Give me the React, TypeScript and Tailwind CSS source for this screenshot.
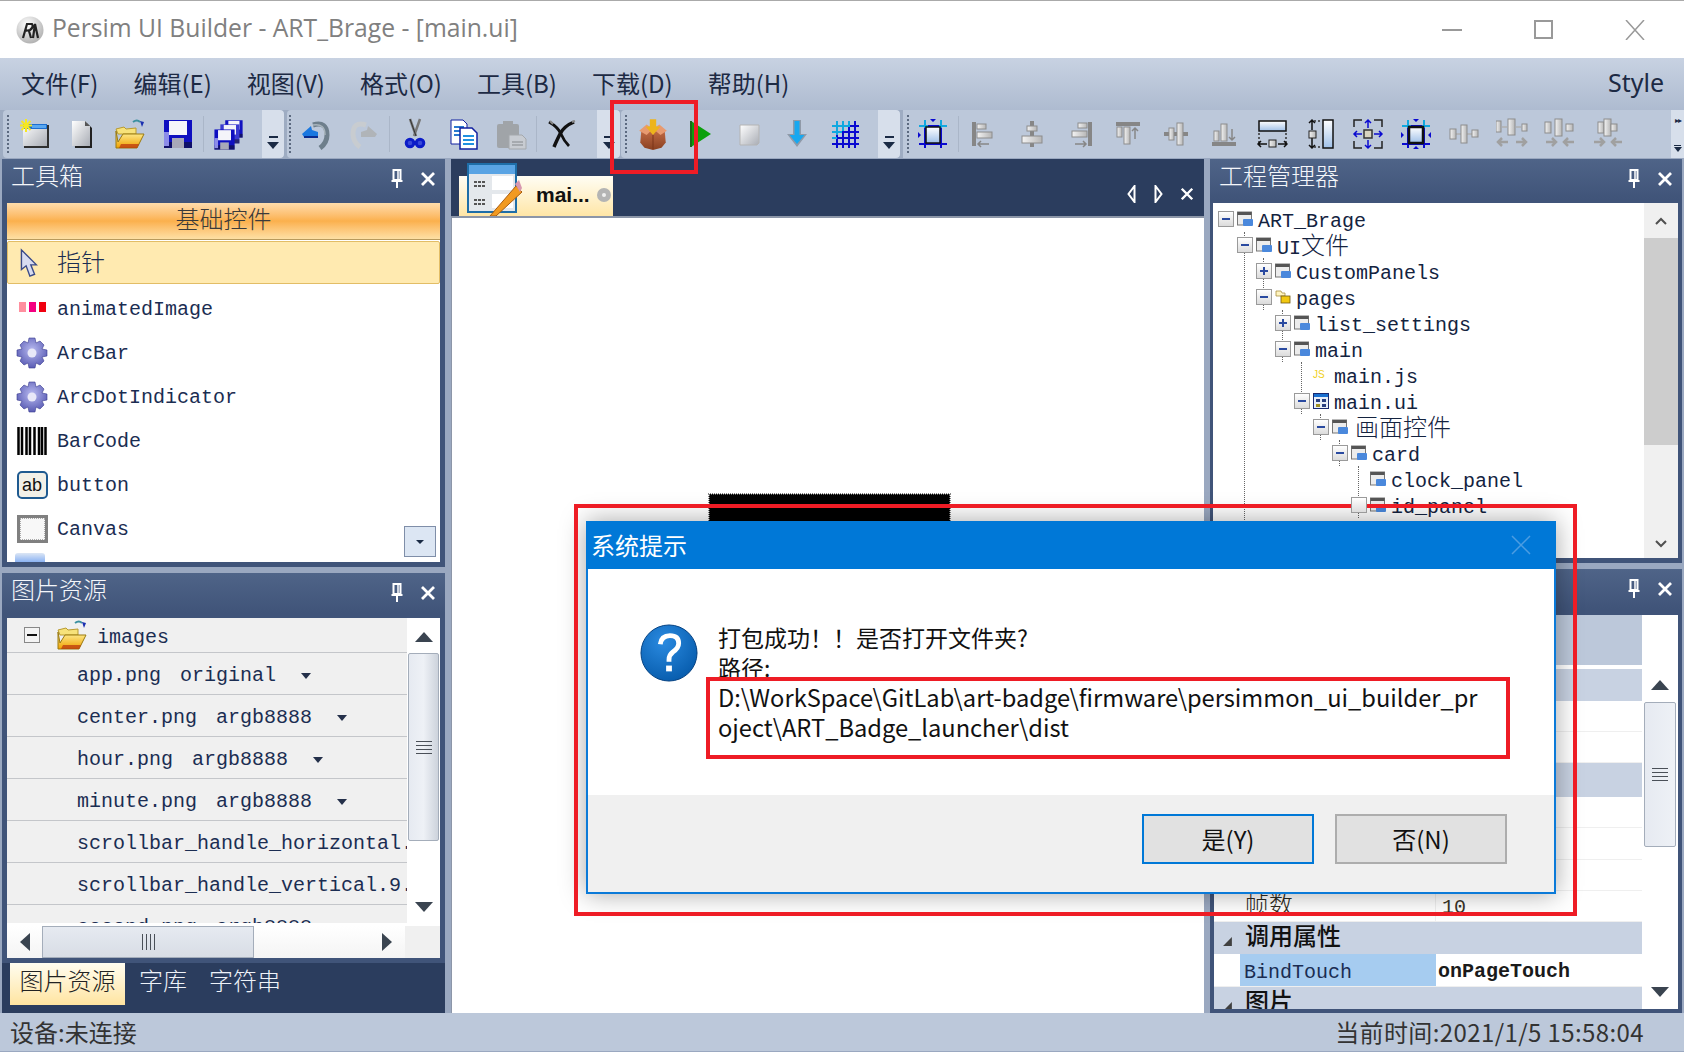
import React from "react";

const cjk = "font-['Noto_Sans_CJK_SC',sans-serif]";

function C({ children, className = "" }: { children: React.ReactNode; className?: string }) {
  return <span className={`font-['Noto_Sans_CJK_SC',sans-serif] text-[24px] font-light leading-none ${className}`}>{children}</span>;
}

function Defs() {
  return (
    <svg className="absolute h-0 w-0">
      <defs>
        <linearGradient id="wg" x1="0" y1="0" x2="1" y2="1"><stop offset="0" stopColor="#ffffff" /><stop offset="1" stopColor="#a9adb5" /></linearGradient>
        <linearGradient id="bar" x1="0" y1="0" x2="1" y2="0"><stop offset="0" stopColor="#f4f4f4" /><stop offset="1" stopColor="#b5b5b5" /></linearGradient>
        <linearGradient id="barb" x1="0" y1="0" x2="0" y2="1"><stop offset="0" stopColor="#ffffff" /><stop offset="1" stopColor="#9fc0e8" /></linearGradient>
        <linearGradient id="folder" x1="0" y1="0" x2="0" y2="1"><stop offset="0" stopColor="#fff5a0" /><stop offset="1" stopColor="#f0a000" /></linearGradient>
        <linearGradient id="box" x1="0" y1="0" x2="0" y2="1"><stop offset="0" stopColor="#c8704a" /><stop offset="1" stopColor="#8a4020" /></linearGradient>
        <radialGradient id="gear" cx="0.5" cy="0.4" r="0.7"><stop offset="0" stopColor="#b8baf0" /><stop offset="1" stopColor="#4a4caa" /></radialGradient>
        <radialGradient id="logo" cx="0.4" cy="0.3" r="0.8"><stop offset="0" stopColor="#ffffff" /><stop offset="1" stopColor="#a8a8a8" /></radialGradient>
        <radialGradient id="qm" cx="0.4" cy="0.3" r="0.8"><stop offset="0" stopColor="#2a8ae0" /><stop offset="1" stopColor="#0458a8" /></radialGradient>
      </defs>
    </svg>
  );
}

function I({ children, size = 32, className = "" }: { children: React.ReactNode; size?: number; className?: string }) {
  return (
    <svg viewBox="0 0 32 32" width={size} height={size} className={`shrink-0 ${className}`}>
      {children}
    </svg>
  );
}

const NewWin = () => (
  <I>
    <rect x="6" y="7" width="25" height="23" fill="#303030" />
    <rect x="5" y="6" width="24" height="22" fill="url(#wg)" />
    <rect x="5" y="6" width="24" height="5" fill="#1d6fd0" />
    <rect x="14" y="7" width="14" height="3" fill="#5aa8f0" />
    <path d="M8 1v13M2 7.5h12M3.5 3l9 9M12.500 3l-9 9" stroke="#f6e820" strokeWidth="2" />
  </I>
);
const NewDoc = () => (
  <I>
    <path d="M8 5h13l5 5v20H9z" fill="#222" />
    <path d="M6 3h13l5 5v20H6z" fill="url(#wg)" />
    <path d="M19 3l5 5h-5z" fill="#555" />
  </I>
);
const Floppy = ({ x = 0, y = 0, s = 1, c = "#0f0fc0" }: { x?: number; y?: number; s?: number; c?: string }) => (
  <g transform={`translate(${x} ${y}) scale(${s})`}>
    <rect x="2" y="2" width="28" height="28" fill={c} />
    <rect x="2" y="24" width="28" height="6" fill="#111" opacity="0.5" />
    <rect x="7" y="3" width="18" height="14" fill="#f4f4fa" />
    <rect x="10" y="20" width="12" height="10" fill="#a8a8b8" />
    <rect x="2" y="14" width="5" height="14" fill="#8c8ce8" />
  </g>
);
const OpenFolder = ({ size = 32 }: { size?: number }) => (
  <I size={size}>
    <path d="M2 11l8-2 2 2 10-1v6H4z" fill="#f7e27a" stroke="#b89a30" strokeWidth="1" />
    <path d="M2 13v17h21l7-14H9l-5 8z" fill="url(#folder)" stroke="#9a7a10" strokeWidth="1" />
    <path d="M5 30h18l2-4H7z" fill="#b83010" opacity="0.7" />
    <path d="M19 4q4-3 7 0" stroke="#3a90a0" strokeWidth="2" fill="none" />
    <path d="M26 3l4 1-2 5z" fill="#1a30b0" />
  </I>
);
const Save = () => <I><Floppy /></I>;
const SaveAll = () => (
  <I>
    <Floppy x={11} y={1} s={0.62} c="#1212c0" />
    <Floppy x={6} y={5} s={0.68} c="#3a3ad0" />
    <Floppy x={0} y={10} s={0.72} />
  </I>
);
const Undo = () => (
  <I>
    <path d="M13 7Q27 3 27 17q0 8-7 13" stroke="#6e7f8c" strokeWidth="5" fill="none" />
    <path d="M13 7Q25 5 25 17" stroke="#a8b4bc" strokeWidth="1.500" fill="none" />
    <path d="M2 16L11 8l1 4 6 2v5H4z" fill="#1a78e0" />
    <path d="M4 19h14" stroke="#0a2c90" strokeWidth="2" />
  </I>
);
const Redo = () => (
  <I>
    <path d="M18 7Q5 3 5 16q0 8 7 13" stroke="#c8ccd0" strokeWidth="5" fill="none" />
    <path d="M29 16L20 8l-1 4-6 2v5h14z" fill="#b0b4b8" />
  </I>
);
const Cut = () => (
  <I>
    <path d="M11 1l6 17M21 1l-6 17" stroke="#777" strokeWidth="2.500" />
    <path d="M11 1l6 17" stroke="#333" strokeWidth="1" />
    <circle cx="11" cy="25" r="3.800" fill="#3a4ad8" stroke="#0c1cc8" strokeWidth="3" />
    <circle cx="21" cy="25" r="3.800" fill="#3a4ad8" stroke="#0c1cc8" strokeWidth="3" />
  </I>
);
const Copy = () => (
  <I>
    <path d="M4 2h12l4 4v20H4z" fill="#fff" stroke="#1020a0" strokeWidth="1" />
    <path d="M7 9h10M7 13h10M7 17h10" stroke="#2a7ad0" strokeWidth="2" />
    <path d="M13 10h12l5 5v16H13z" fill="#fff" stroke="#1020a0" strokeWidth="1.500" />
    <path d="M16 18h11M16 22h11M16 26h11" stroke="#2090e0" strokeWidth="2" />
  </I>
);
const Paste = () => (
  <I>
    <rect x="2" y="6" width="22" height="24" rx="2" fill="#a0a4a8" />
    <rect x="8" y="3" width="10" height="6" fill="#a0a4a8" />
    <path d="M14 17h13l4 4v10H14z" fill="#c8ccd2" stroke="#a4a8ac" strokeWidth="1" />
    <path d="M17 24h11M17 27h11" stroke="#9a9ea4" strokeWidth="1.500" />
  </I>
);
const Del = () => (
  <I>
    <path d="M3 4q9 5 12 12t8 12" stroke="#111" strokeWidth="2.800" fill="none" />
    <path d="M28 4Q18 8 14 16T8 29" stroke="#111" strokeWidth="3.500" fill="none" />
    <path d="M4 3l3 3M26 4l3-1" stroke="#888" strokeWidth="2" />
  </I>
);
const Pack = () => (
  <I size={34}>
    <path d="M5 13l11-3 11 3 1 11-4 5-8 2-8-2-4-5z" fill="url(#box)" />
    <path d="M3 13l7-6 6 4-6 6zM29 13l-7-6-6 4 7 6z" fill="#e89a70" />
    <path d="M16 17v13" stroke="#7a3418" strokeWidth="1.500" opacity="0.6" />
    <path d="M13 2h6v7h4l-7 8-7-8h4z" fill="#edb41c" />
  </I>
);
const Play = () => (
  <I>
    <path d="M6 3l20 13L6 29z" fill="#0ca00c" />
    <path d="M6 3v26" stroke="#1a6a1a" strokeWidth="2" />
  </I>
);
const Stop = () => (
  <I>
    <path d="M7 7h19v18l-2 2H7z" fill="url(#wg)" stroke="#b4b4b4" strokeWidth="1" />
  </I>
);
const Down = () => (
  <I>
    <path d="M12 2h8v14h6L16 29 6 16h6z" fill="#909aa8" />
    <path d="M13.500 3h5v14h5L16 26 8.500 17h5z" fill="#18a8f0" />
  </I>
);
const Grid = () => (
  <I>
    <path d="M8 3v27M14 3v27M20 3v27M26 3v27M3 8h27M3 14h27M3 20h27M3 26h27" stroke="#0a0ad0" strokeWidth="2" />
    <path d="M8 3v14M14 3v10M20 3v6M3 8h17M3 14h10M3 20h5" stroke="#10a8e0" strokeWidth="2" />
  </I>
);

const Bar = ({ x, y, w, h, b = false, o = 1 }: { x: number; y: number; w: number; h: number; b?: boolean; o?: number }) => (
  <rect x={x} y={y} width={w} height={h} fill={b ? "url(#barb)" : "url(#bar)"} stroke="#8c8c8c" strokeWidth="1" opacity={o} />
);
const Crop = ({ dark = false }: { dark?: boolean }) => (
  <I>
    <path d="M2 8h28M2 26h28" stroke="#0a0ad0" strokeWidth="2" />
    <path d="M2 8h9M22 8h8" stroke="#10a8e0" strokeWidth="2" />
    <path d="M8 2v28M24 2v28" stroke="#0a0ad0" strokeWidth="2" />
    <path d="M8 2v8M24 2v8" stroke="#10a8e0" strokeWidth="2" />
    <rect x="9" y="9" width="14" height="16" fill="url(#barb)" stroke="#111" strokeWidth={dark ? 2.5 : 1.5} />
    <path d="M13 1h6l-3 3zM1 14v6l3-3z" fill="#0a0ad0" />
    {dark && <path d="M31 14v6l-3-3zM13 31h6l-3-3z" fill="#0a0ad0" />}
  </I>
);
const GrayA = "#868686";
const Al1 = () => (
  <I>
    <rect x="4" y="4" width="4" height="24" fill={GrayA} />
    <Bar x={9} y={6} w={9} h={5} />
    <Bar x={9} y={14} w={15} h={6} />
    <path d="M21 26H10M13 23l-3 3 3 3" stroke={GrayA} strokeWidth="1.500" fill="none" />
  </I>
);
const Al2 = () => (
  <I>
    <rect x="14" y="3" width="4" height="26" fill={GrayA} />
    <Bar x={11} y={8} w={10} h={5} />
    <Bar x={6} y={18} w={20} h={7} />
  </I>
);
const Al3 = () => (
  <I>
    <rect x="24" y="4" width="4" height="24" fill={GrayA} />
    <Bar x={14} y={5} w={9} h={5} />
    <Bar x={8} y={13} w={15} h={6} />
    <path d="M11 26h11M19 23l3 3-3 3" stroke={GrayA} strokeWidth="1.500" fill="none" />
  </I>
);
const Al4 = () => (
  <I>
    <rect x="4" y="4" width="24" height="4" fill={GrayA} />
    <Bar x={5} y={9} w={5} h={10} />
    <Bar x={12} y={9} w={6} h={17} />
    <path d="M23 21V10M20 13l3-3 3 3" stroke={GrayA} strokeWidth="1.500" fill="none" />
  </I>
);
const Al5 = () => (
  <I>
    <rect x="4" y="14" width="24" height="4" fill={GrayA} />
    <Bar x={9} y={10} w={5} h={12} />
    <Bar x={17} y={5} w={6} h={22} />
  </I>
);
const Al6 = () => (
  <I>
    <rect x="4" y="24" width="24" height="4" fill={GrayA} />
    <Bar x={6} y={13} w={5} h={10} />
    <Bar x={13} y={6} w={6} h={17} />
    <path d="M24 11v11M21 19l3 3 3-3" stroke={GrayA} strokeWidth="1.500" fill="none" />
  </I>
);
const SizeW = () => (
  <I>
    <rect x="3" y="3" width="27" height="10" fill="url(#barb)" stroke="#111" strokeWidth="1.500" />
    <path d="M3 15v10M30 15v10" stroke="#333" strokeWidth="1.500" strokeDasharray="2 2" />
    <rect x="13" y="22" width="7" height="7" fill="url(#bar)" stroke="#222" />
    <path d="M2 26h9M5 23l-3 3 3 3M22 26h9M28 23l3 3-3 3" stroke="#111" strokeWidth="1.500" fill="none" />
  </I>
);
const SizeH = () => (
  <I>
    <rect x="19" y="2" width="10" height="28" fill="url(#barb)" stroke="#111" strokeWidth="1.500" />
    <path d="M8 2v10M5 5l3-3 3 3M8 20v10M5 27l3 3 3-3" stroke="#111" strokeWidth="1.500" fill="none" />
    <path d="M10 3h7M10 29h7" stroke="#333" strokeWidth="1.500" strokeDasharray="2 2" />
    <rect x="5" y="13" width="7" height="7" fill="url(#bar)" stroke="#222" />
  </I>
);
const Fit = () => (
  <I>
    <path d="M2 9V2h8M22 2h8v7M2 23v7h8M22 30h8v-7" stroke="#222" strokeWidth="1.500" fill="none" />
    <rect x="12" y="12" width="8" height="8" fill="#d8d4c0" stroke="#333" strokeWidth="1.500" />
    <path d="M16 2v8M13 5l3-3 3 3M16 22v8M13 27l3 3 3-3M2 16h8M5 13l-3 3 3 3M22 16h8M27 13l3 3-3 3" stroke="#0a0ad0" strokeWidth="1.500" fill="none" />
  </I>
);
const Sp1 = () => (
  <I>
    <path d="M2 16h28" stroke="#b0b0b0" strokeWidth="1.500" />
    <Bar x={2} y={11} w={6} h={10} />
    <Bar x={13} y={7} w={6} h={18} />
    <Bar x={24} y={12} w={6} h={7} />
  </I>
);
const Sp2 = () => (
  <I>
    <Bar x={0} y={3} w={5} h={11} />
    <Bar x={12} y={1} w={7} h={16} />
    <Bar x={26} y={6} w={5} h={7} />
    <path d="M6 9h5M20 9h5" stroke="#b0b0b0" strokeWidth="1.500" />
    <path d="M12 24H2M6 20l-4 4 4 4M20 24h10M26 20l4 4-4 4" stroke="#a0a0a0" strokeWidth="2.500" fill="none" />
  </I>
);
const Sp3 = () => (
  <I>
    <Bar x={1} y={4} w={6} h={11} />
    <Bar x={11} y={1} w={7} h={17} />
    <Bar x={22} y={6} w={7} h={7} />
    <path d="M2 24h10M8 20l4 4-4 4M30 24H20M24 20l-4 4 4 4" stroke="#a0a0a0" strokeWidth="2.500" fill="none" />
  </I>
);
const Sp4 = () => (
  <I>
    <Bar x={6} y={4} w={6} h={11} />
    <Bar x={12} y={1} w={7} h={17} />
    <Bar x={19} y={6} w={6} h={7} />
    <path d="M2 24h10M8 20l4 4-4 4M30 24H20M24 20l-4 4 4 4" stroke="#a0a0a0" strokeWidth="2.500" fill="none" />
  </I>
);

const Grip = () => <div className="h-[38px] w-[2px] shrink-0 border-l-2 border-dotted border-[#5c6a80]" />;
const Sep = () => <div className="h-[36px] w-[1px] mx-[1px] shrink-0 bg-[#aab6c8]" />;
const B = ({ children }: { children: React.ReactNode }) => <div className="flex h-full w-[48px] shrink-0 items-center justify-center">{children}</div>;
const Chevron = () => (
  <div className="flex flex-col items-center gap-[4px] pt-[26px]">
    <div className="h-[2px] w-[9px] bg-[#1a2a44]" />
    <div className="h-0 w-0 border-x-[6px] border-t-[7px] border-x-transparent border-t-[#1a2a44]" />
  </div>
);

function Toolbar() {
  return (
    <div className="flex h-[48px] shrink-0 bg-[#9eacc2] pl-[3px]">
      <div className="flex h-full w-[281px] overflow-hidden rounded-[4px] bg-[#bcc8da]">
        <div className="flex flex-1 items-center pl-[4px]">
          <Grip />
          <div className="w-[1px]" />
          <B><NewWin /></B><B><NewDoc /></B><B><OpenFolder /></B><B><Save /></B><Sep /><B><SaveAll /></B>
        </div>
        <div className="flex w-[22px] justify-center rounded-r-[4px] bg-[#d7dfeb]"><Chevron /></div>
      </div>
      <div className="ml-[3px] flex h-full w-[333px] overflow-hidden rounded-[4px] bg-[#bcc8da]">
        <div className="flex flex-1 items-center pl-[2px]">
          <Grip />
          <div className="w-[1px]" />
          <B><Undo /></B><B><Redo /></B><Sep /><B><Cut /></B><B><Copy /></B><B><Paste /></B><Sep /><B><Del /></B>
        </div>
        <div className="flex w-[23px] justify-center rounded-r-[4px] bg-[#d7dfeb]"><Chevron /></div>
      </div>
      <div className="ml-[1px] flex h-full w-[279px] overflow-hidden rounded-[4px] bg-[#bcc8da]">
        <div className="flex flex-1 items-center pl-[4px]">
          <Grip />
          <div className="w-[2px]" />
          <B><Pack /></B><B><Play /></B><B><Stop /></B><B><Down /></B><B><Grid /></B>
        </div>
        <div className="flex w-[22px] justify-center rounded-r-[4px] bg-[#d7dfeb]"><Chevron /></div>
      </div>
      <div className="ml-[3px] flex h-full flex-1 bg-[#bcc8da]">
        <div className="flex flex-1 items-center pl-[4px]">
          <Grip />
          <B><Crop /></B><Sep /><B><Al1 /></B><B><Al2 /></B><B><Al3 /></B><B><Al4 /></B><B><Al5 /></B><B><Al6 /></B>
          <B><SizeW /></B><B><SizeH /></B><B><Fit /></B><B><Crop dark /></B><B><Sp1 /></B><B><Sp2 /></B><B><Sp3 /></B><B><Sp4 /></B>
        </div>
        <div className="flex w-[13px] flex-col items-center justify-between bg-[#d7dfeb] py-[6px]">
          <span className="text-[8px] leading-none tracking-[-1px] text-[#1a2a44]">▸▸</span>
          <div className="flex flex-col items-center gap-[1px]">
            <div className="h-[1px] w-[7px] bg-[#1a2a44]" />
            <div className="h-0 w-0 border-x-[4px] border-t-[5px] border-x-transparent border-t-[#1a2a44]" />
          </div>
        </div>
      </div>
    </div>
  );
}

const Pin = () => (
  <svg viewBox="0 0 12 20" width="12" height="20">
    <path d="M2.500 1h7v10h-7z" fill="none" stroke="#fff" strokeWidth="2" />
    <path d="M0.500 12h11" stroke="#fff" strokeWidth="2" />
    <path d="M6 12v7" stroke="#fff" strokeWidth="2" />
    <path d="M7 2v9" stroke="#fff" strokeWidth="1.500" />
  </svg>
);
const XIcon = ({ s = 16 }: { s?: number }) => (
  <svg viewBox="0 0 16 16" width={s} height={s}>
    <path d="M2 2l12 12M14 2L2 14" stroke="#fff" strokeWidth="2.800" />
  </svg>
);

function PanelTitle({ title, pr }: { title?: string; pr?: string }) {
  return (
    <div className={`flex h-[40px] shrink-0 items-center justify-between bg-gradient-to-b from-[#4f6488] to-[#405479] pl-[9px] ${pr}`}>
      <C className="mb-[8px] text-[#f4f6fa]">{title}</C>
      <div className="flex items-center gap-[17px]"><Pin /><XIcon /></div>
    </div>
  );
}

const Gear = () => (
  <svg viewBox="0 0 32 32" width="32" height="32" className="shrink-0">
    <g fill="url(#gear)" stroke="#3a3c90" strokeWidth="0.600">
      <path d="M13 1h6l1 5 4-2 4 4-2 4 5 1v6l-5 1 2 4-4 4-4-2-1 5h-6l-1-5-4 2-4-4 2-4-5-1v-6l5-1-2-4 4-4 4 2z" />
    </g>
    <circle cx="16" cy="16" r="4.500" fill="#e8e8f8" />
  </svg>
);

const listCls = "font-['Liberation_Mono',monospace] text-[20px] text-[#1b2d52] leading-none";

function ToolRow({ icon, label }: { icon: React.ReactNode; label: string }) {
  return (
    <div className="flex h-[44px] shrink-0 items-center">
      <div className="flex w-[50px] shrink-0 justify-center">{icon}</div>
      <span className={`${listCls} pt-[2px]`}>{label}</span>
    </div>
  );
}

function ToolBox() {
  return (
    <div className="flex h-[408px] shrink-0 flex-col bg-[#405479]">
      <PanelTitle title="工具箱" pr="pr-[9px]" />
      <div className="mx-[5px] mt-[4px] flex h-[359px] flex-col overflow-hidden bg-white relative">
        <div className="flex h-[37px] shrink-0 items-center justify-center border-b border-[#b89a5c] bg-gradient-to-b from-[#fedcab] via-[#fbb04c] to-[#fde0a4] pb-[6px]">
          <C className="text-[#3a3a3a]">基础控件</C>
        </div>
        <div className="mt-[1px] flex h-[43px] shrink-0 items-center rounded-[2px] border border-[#e2bd66] bg-[#ffeab0] pb-[4px] pl-[10px]">
          <svg viewBox="0 0 20 32" width="20" height="30" className="mt-[4px] shrink-0">
            <path d="M3 2v21l5-4 4 11 5-2-4-10h6z" fill="#d8dcf0" stroke="#3a4a88" strokeWidth="1.500" />
          </svg>
          <C className="ml-[19px] text-[#1b2d52]">指针</C>
        </div>
        <div className="flex flex-col pt-[3px]">
          <ToolRow label="animatedImage" icon={<div className="mb-[4px] flex gap-[3px]"><div className="h-[10px] w-[7px] bg-[#ff8f9f]" /><div className="h-[10px] w-[7px] bg-[#f40080]" /><div className="h-[10px] w-[7px] bg-[#f00010]" /></div>} />
          <ToolRow label="ArcBar" icon={<Gear />} />
          <ToolRow label="ArcDotIndicator" icon={<Gear />} />
          <ToolRow label="BarCode" icon={
            <svg viewBox="0 0 30 28" width="30" height="28">
              <path d="M1.500 0v28M5 0v28M9.500 0v28M13 0v28M17.500 0v28M22 0v28M25 0v28M28.500 0v28" stroke="#000" strokeWidth="2.500" />
            </svg>} />
          <ToolRow label="button" icon={
            <div className="flex h-[28px] w-[31px] items-center justify-center rounded-[5px] border-2 border-[#1f5a90] bg-[#f2f0e8] font-['Liberation_Sans',sans-serif] text-[18px] leading-none text-[#111]">ab</div>} />
          <ToolRow label="Canvas" icon={
            <div className="h-[28px] w-[31px] border-[3px] border-[#808080] bg-[#f8f8f8] outline-1 outline-dotted -outline-offset-4 outline-[#aaa]" />} />
          <div className="ml-[8px] mt-[2px] h-[12px] w-[30px] rounded-t-[3px] bg-gradient-to-b from-[#dce6f4] to-[#70a0f0]" />
        </div>
        <div className="absolute bottom-[5px] right-[4px] flex h-[31px] w-[32px] items-center justify-center border border-[#7f8ea8] bg-[#dce6f3]">
          <div className="h-0 w-0 border-x-[4px] border-t-[4px] border-x-transparent border-t-[#1a2a44]" />
        </div>
      </div>
    </div>
  );
}

const Tri = () => <div className="h-0 w-0 shrink-0 border-x-[5px] border-t-[6px] border-x-transparent border-t-[#24304a]" />;

function ImgRow({ name, fmt, gap = "mr-[25px]", lead = "mr-[19px]" }: { name: string; fmt?: string; gap?: string; lead?: string }) {
  return (
    <div className={`flex h-[42px] shrink-0 items-center whitespace-nowrap border-b border-[#c4c6ca] pl-[70px] pt-[4px] ${listCls} text-[#1a2438]`}>
      <span className={lead}>{name}</span>
      {fmt && <span className={gap}>{fmt}</span>}
      {fmt && <Tri />}
    </div>
  );
}

const VArrow = ({ up }: { up?: boolean }) => (
  <div className={`h-0 w-0 border-x-[9px] border-x-transparent ${up ? "border-b-[10px] border-b-[#3a4450]" : "border-t-[10px] border-t-[#3a4450]"}`} />
);

const Lines = () => (
  <div className="flex flex-col gap-[3px]">
    <div className="h-[1px] w-[16px] bg-[#4a5058]" />
    <div className="h-[1px] w-[16px] bg-[#4a5058]" />
    <div className="h-[1px] w-[16px] bg-[#4a5058]" />
    <div className="h-[1px] w-[16px] bg-[#4a5058]" />
  </div>
);

function ImagePanel() {
  return (
    <div className="flex h-[440px] shrink-0 flex-col bg-[#405479]">
      <PanelTitle title="图片资源" pr="pr-[9px]" />
      <div className="mx-[5px] mt-[5px] h-[340px] shrink-0 bg-white">
        <div className="flex h-[305px]">
          <div className="flex w-[400px] shrink-0 flex-col overflow-hidden bg-[#f0f0f0]">
            <div className="flex h-[35px] shrink-0 items-center border-b border-[#c4c6ca] pl-[17px]">
              <div className="flex h-[16px] w-[16px] items-center justify-center border border-[#888] bg-[#f4f4f4]"><div className="h-[2px] w-[10px] bg-[#111]" /></div>
              <div className="ml-[16px]"><OpenFolder /></div>
              <span className={`ml-[9px] pt-[6px] ${listCls} text-[#1a2438]`}>images</span>
            </div>
            <ImgRow name="app.png" fmt="original" />
            <ImgRow name="center.png" fmt="argb8888" />
            <ImgRow name="hour.png" fmt="argb8888" />
            <ImgRow name="minute.png" fmt="argb8888" />
            <ImgRow name="scrollbar_handle_horizontal.9.png" />
            <ImgRow name="scrollbar_handle_vertical.9.png" />
            <ImgRow name="second.png" fmt="argb8888" />
          </div>
          <div className="flex flex-1 flex-col items-center">
            <div className="flex h-[35px] items-center pt-[2px]"><VArrow up /></div>
            <div className="flex h-[188px] w-[31px] items-center justify-center rounded-[2px] border border-[#a4adba] bg-gradient-to-r from-[#e6eaf1] via-[#eef1f6] to-[#cdd3dc]"><Lines /></div>
            <div className="flex flex-1 items-end pb-[11px]"><VArrow /></div>
          </div>
        </div>
        <div className="mt-[3px] flex h-[32px]">
          <div className="flex flex-1 items-center bg-gradient-to-b from-white to-[#f4f4f4]">
            <div className="ml-[13px] h-0 w-0 border-y-[9px] border-r-[10px] border-y-transparent border-r-[#3a4450]" />
            <div className="ml-[12px] flex h-full w-[212px] items-center justify-center gap-[3px] border border-[#a4adba] bg-gradient-to-b from-[#e6eaf1] to-[#d8dde5]">
              <div className="h-[16px] w-[1px] bg-[#4a5058]" /><div className="h-[16px] w-[1px] bg-[#4a5058]" /><div className="h-[16px] w-[1px] bg-[#4a5058]" /><div className="h-[16px] w-[1px] bg-[#4a5058]" />
            </div>
            <div className="ml-[128px] h-0 w-0 border-y-[9px] border-l-[10px] border-y-transparent border-l-[#3a4450]" />
          </div>
          <div className="w-[35px] bg-[#f0f0f0]" />
        </div>
      </div>
      <div className="mt-[5px] flex flex-1 items-start bg-[#2b3d5e] pl-[8px]">
        <div className="flex h-[42px] w-[115px] items-center justify-center bg-gradient-to-b from-[#fffdf0] to-[#ffe4a0] pb-[8px]"><C className="text-[#222]">图片资源</C></div>
        <div className="flex h-[42px] items-center pb-[8px] pl-[14px]"><C className="text-[#eef2f8]">字库</C></div>
        <div className="flex h-[42px] items-center pb-[8px] pl-[22px]"><C className="text-[#eef2f8]">字符串</C></div>
      </div>
    </div>
  );
}

const WinIcon = ({ folder, ui, size = 17 }: { folder?: boolean; ui?: boolean; size?: number }) => {
  if (folder)
    return (
      <svg viewBox="0 0 16 16" width={size} height={size} className="shrink-0">
        <path d="M1 2h5l1 2h3v3H1z" fill="#fff4c0" stroke="#a89040" strokeWidth="0.800" />
        <rect x="6" y="7" width="9" height="7" fill="#f2c810" stroke="#705810" strokeWidth="0.800" />
      </svg>
    );
  if (ui)
    return (
      <svg viewBox="0 0 16 16" width={size} height={size} className="shrink-0">
        <rect x="0.500" y="0.500" width="15" height="15" fill="#e8eef8" stroke="#1a2a70" />
        <rect x="1" y="1" width="14" height="3" fill="#1a70d0" />
        <rect x="3" y="6" width="4" height="3" fill="#2a4080" />
        <rect x="9" y="6" width="4" height="3" fill="#2a4080" />
        <rect x="3" y="11" width="4" height="3" fill="#a09020" />
        <rect x="9" y="11" width="4" height="3" fill="#2a4080" />
      </svg>
    );
  return (
    <svg viewBox="0 0 16 16" width={size} height={size} className="shrink-0">
      <rect x="0.500" y="1" width="14" height="13" fill="#ececec" stroke="#777" />
      <rect x="0.500" y="1" width="14" height="3" fill="#555" />
      <rect x="6" y="8" width="10" height="7" rx="1" fill="#4a88dc" />
    </svg>
  );
};

type TreeItem = { lvl: number; box?: "+" | "-" | "e"; icon?: "f" | "u" | "w" | "j"; t: React.ReactNode };
const tree: TreeItem[] = [
  { lvl: 0, box: "-", icon: "w", t: "ART_Brage" },
  { lvl: 1, box: "-", icon: "w", t: <>UI<C>文件</C></> },
  { lvl: 2, box: "+", icon: "w", t: "CustomPanels" },
  { lvl: 2, box: "-", icon: "f", t: "pages" },
  { lvl: 3, box: "+", icon: "w", t: "list_settings" },
  { lvl: 3, box: "-", icon: "w", t: "main" },
  { lvl: 4, icon: "j", t: "main.js" },
  { lvl: 4, box: "-", icon: "u", t: "main.ui" },
  { lvl: 5, box: "-", icon: "w", t: <C className="ml-[2px]">画面控件</C> },
  { lvl: 6, box: "-", icon: "w", t: "card" },
  { lvl: 7, icon: "w", t: "clock_panel" },
  { lvl: 7, box: "e", icon: "w", t: "id_panel" },
];
const dots: [number, number, number][] = [
  [27, 26, 330],
  [46, 52, 52],
  [65, 104, 52],
  [84, 156, 52],
  [103, 208, 26],
  [122, 234, 26],
  [141, 260, 52],
];

function TreeRow({ it }: { it: TreeItem }) {
  return (
    <div className="flex h-[26px] shrink-0 items-center whitespace-nowrap" style={{ paddingLeft: 5 + it.lvl * 19 }}>
      <div className="flex w-[19px] shrink-0">
        {it.box ? (
          <div className="relative z-10 flex h-[16px] w-[16px] items-center justify-center border border-[#9a9a9a] bg-gradient-to-b from-white to-[#dcdcdc]">
            {it.box !== "e" && <div className="absolute h-[2px] w-[8px] bg-[#2a4aa0]" />}
            {it.box === "+" && <div className="absolute h-[8px] w-[2px] bg-[#2a4aa0]" />}
          </div>
        ) : null}
      </div>
      {it.icon === "j" ? (
        <span className="w-[16px] shrink-0 font-['Liberation_Sans',sans-serif] text-[10px] leading-none text-[#f0d020]">JS</span>
      ) : (
        <WinIcon folder={it.icon === "f"} ui={it.icon === "u"} size={16} />
      )}
      <span className={`ml-[5px] ${typeof it.t === "string" ? "pt-[6px]" : ""} ${listCls} text-[#14233f]`}>{it.t}</span>
    </div>
  );
}

function ProjectPanel() {
  return (
    <div className="flex h-[404px] shrink-0 flex-col bg-[#405479]">
      <PanelTitle title="工程管理器" pr="pr-[9px]" />
      <div className="ml-[3px] mr-[4px] mt-[4px] flex h-[355px] bg-white">
        <div className="relative flex flex-1 flex-col overflow-hidden pt-[3px]">
          {dots.map(([x, y, h]) => (
            <div key={x} className="absolute border-l border-dotted border-[#666]" style={{ left: x + 4, top: y + 3, height: h }} />
          ))}
          {tree.map((it, i) => <TreeRow key={i} it={it} />)}
        </div>
        <div className="flex w-[34px] shrink-0 flex-col items-center bg-[#f0f0f0]">
          <div className="flex h-[35px] items-center">
            <svg viewBox="0 0 12 8" width="12" height="8"><path d="M1 7l5-5 5 5" stroke="#505050" strokeWidth="2" fill="none" /></svg>
          </div>
          <div className="h-[207px] w-full bg-[#cdcdcd]" />
          <div className="flex flex-1 items-end pb-[10px]">
            <svg viewBox="0 0 12 8" width="12" height="8"><path d="M1 1l5 5 5-5" stroke="#505050" strokeWidth="2" fill="none" /></svg>
          </div>
        </div>
      </div>
    </div>
  );
}

const Cat = ({ h, t }: { h: string; t?: string }) => (
  <div className={`flex ${h} shrink-0 items-center bg-[#c8d2e2] pl-[8px]`}>
    <svg viewBox="0 0 10 10" width="11" height="11" className="mt-[6px] shrink-0"><path d="M9 1v8H1z" fill="#404040" /></svg>
    {t && <C className="mb-[6px] ml-[12px] font-medium text-[#111]">{t}</C>}
  </div>
);
const PropRow = ({ h, k, v }: { h: string; k?: string; v?: string }) => (
  <div className={`flex ${h} shrink-0 border-b border-[#efefef]`}>
    <div className="flex w-[222px] shrink-0 items-center border-r border-[#efefef] pl-[31px]">{k && <C className="mb-[6px] text-[#2e2a20]">{k}</C>}</div>
    <span className={`self-end pb-[3px] pl-[6px] ${listCls} text-[#3a3428]`}>{v}</span>
  </div>
);

function PropPanel() {
  return (
    <div className="flex h-[444px] shrink-0 flex-col bg-[#405479] pb-[4px]">
      <PanelTitle pr="pr-[9px]" />
      <div className="ml-[4px] mr-[4px] mt-[6px] flex flex-1 overflow-hidden bg-white">
        <div className="flex flex-1 flex-col overflow-hidden">
          <div className="h-[50px] shrink-0 bg-[#bcc8da]" />
          <div className="h-[4px] shrink-0" />
          <Cat h="h-[32px]" />
          <PropRow h="h-[31px]" />
          <PropRow h="h-[31px]" />
          <Cat h="h-[34px]" />
          <PropRow h="h-[31px]" />
          <PropRow h="h-[32px]" />
          <PropRow h="h-[31px]" />
          <PropRow h="h-[31px]" k="帧数" v="10" />
          <Cat h="h-[32px]" t="调用属性" />
          <div className="flex h-[33px] shrink-0 border-b border-[#efefef]">
            <div className="ml-[26px] flex w-[196px] items-center bg-[#a6ccf0] pl-[4px] pt-[6px]"><span className={`${listCls} text-[#1b2d52]`}>BindTouch</span></div>
            <div className="flex items-center pl-[2px] pt-[4px]"><span className="font-['Liberation_Mono',monospace] text-[20px] font-bold leading-none text-[#1a1a1a]">onPageTouch</span></div>
          </div>
          <Cat h="h-[32px]" t="图片" />
        </div>
        <div className="flex w-[36px] shrink-0 flex-col items-center bg-white">
          <div className="flex h-[87px] items-end pb-[12px]"><VArrow up /></div>
          <div className="flex h-[145px] w-[32px] items-center justify-center rounded-[2px] border border-[#a4adba] bg-gradient-to-r from-[#e6eaf1] to-[#eef1f6]"><Lines /></div>
          <div className="flex flex-1 items-end pb-[12px]"><VArrow /></div>
        </div>
      </div>
    </div>
  );
}

function Center() {
  return (
    <div className="flex w-[753px] shrink-0 flex-col">
      <div className="relative flex h-[57px] shrink-0 items-end bg-[#2b3d5e]">
        <div className="relative ml-[8px] flex h-[40px] w-[154px] items-center bg-gradient-to-b from-[#fffdf4] to-[#ffe6a6]">
          <svg viewBox="0 0 56 54" width="56" height="54" className="absolute left-[7px] top-[-14px]">
            <rect x="1" y="1" width="50" height="50" fill="#1e6ea8" />
            <rect x="3" y="3" width="46" height="46" fill="#e4e8ec" />
            <rect x="3" y="3" width="46" height="9" fill="#5aa4e4" />
            <rect x="26" y="14" width="21" height="14" fill="#fff" />
            <rect x="26" y="32" width="21" height="14" fill="#fff" />
            <path d="M8 20h11M8 24h11M8 38h11M8 42h11" stroke="#555" strokeWidth="2" strokeDasharray="3 1" />
            <path d="M24 54l26-30 6 6-26 24z" fill="#f29a20" stroke="#a85c10" strokeWidth="1" />
            <path d="M49 22l4-4 3 8-2 4z" fill="#d898b0" />
          </svg>
          <span className="ml-[77px] pb-[4px] font-['Liberation_Sans',sans-serif] text-[21px] font-bold leading-none text-[#111]">mai...</span>
          <div className="absolute right-[2px] top-[12px] flex h-[14px] w-[14px] items-center justify-center rounded-full bg-[#b4b4b4]"><div className="h-[4px] w-[4px] rounded-full bg-[#f0f0f0]" /></div>
        </div>
        <div className="absolute right-[10px] top-[26px] flex items-center gap-[16px]">
          <svg viewBox="0 0 10 18" width="11" height="18"><path d="M8 1L2 9l6 8z" fill="none" stroke="#fff" strokeWidth="2" /></svg>
          <svg viewBox="0 0 10 18" width="11" height="18"><path d="M2 1l6 8-6 8z" fill="none" stroke="#fff" strokeWidth="2" /></svg>
          <XIcon s={14} />
        </div>
      </div>
      <div className="relative flex-1 overflow-hidden border-l border-t-2 border-[#8c96a8] bg-white">
        <div className="absolute left-[257px] top-[276px] h-[180px] w-[241px] border border-dotted border-[#666] bg-black outline-1 outline-dotted outline-[#888]" />
      </div>
    </div>
  );
}

function Dialog() {
  return (
    <div className="absolute left-[586px] top-[521px] flex h-[373px] w-[970px] flex-col border-2 border-t-0 border-[#0b7ad8] bg-white shadow-[0_0_24px_rgba(0,0,0,0.35)]">
      <div className="-mx-[2px] flex h-[48px] shrink-0 items-center justify-between bg-[#0078d7] pl-[5px] pr-[25px]">
        <span className={`${cjk} text-[24px] leading-none text-white`}>系统提示</span>
        <svg viewBox="0 0 20 20" width="20" height="20"><path d="M1 1l18 18M19 1L1 19" stroke="#4b9de2" strokeWidth="1.500" /></svg>
      </div>
      <div className={`flex h-[226px] shrink-0 pl-[52px] pt-[53px] ${cjk} leading-[30px] text-[#111]`}>
        <svg viewBox="0 0 60 60" width="58" height="58" className="mt-[2px] shrink-0">
          <circle cx="30" cy="30" r="29" fill="url(#qm)" stroke="#033f80" strokeWidth="1" />
          <path d="M21 21q1-9 10-9t9 8q0 5-6 9-4 3-4 8v2" fill="none" stroke="#fff" strokeWidth="5" />
          <rect x="27" y="43" width="6" height="6" fill="#fff" />
        </svg>
        <div className="ml-[20px] whitespace-nowrap text-[23.67px]">
          <span className="text-[23px]">打包成功！！是否打开文件夹?</span><br />
          <span className="text-[23px]">路径:</span><br />
          D:\WorkSpace\GitLab\art-badge\firmware\persimmon_ui_builder_pr<br />
          oject\ART_Badge_launcher\dist
        </div>
      </div>
      <div className="flex flex-1 justify-end gap-[21px] bg-[#f0f0f0] pr-[47px] pt-[19px]">
        <div className={`flex h-[50px] w-[172px] items-center justify-center border-2 border-[#0078d7] bg-[#e1e1e1] ${cjk} text-[24px] leading-none text-[#111]`}>是(Y)</div>
        <div className={`flex h-[50px] w-[172px] items-center justify-center border-2 border-[#adadad] bg-[#e1e1e1] ${cjk} text-[24px] leading-none text-[#111]`}>否(N)</div>
      </div>
    </div>
  );
}

function TitleBar() {
  return (
    <div className="flex h-[58px] shrink-0 items-center border-t border-[#aaaaaa] bg-white pl-[16px] pr-[39px]">
      <svg viewBox="0 0 28 28" width="28" height="28" className="shrink-0">
        <circle cx="14" cy="14" r="13.500" fill="url(#logo)" />
        <path d="M7 22L11 8h5q2 3-2 6l-5 1M13 15l2 7M17 22l2-14 3 14" stroke="#222" strokeWidth="2.200" fill="none" />
      </svg>
      <span className="ml-[8px] pb-[2px] font-['Open_Sans',sans-serif] text-[24.7px] leading-none text-[#808080]">Persim UI Builder - ART_Brage - [main.ui]</span>
      <div className="ml-auto flex items-center gap-[72px]">
        <div className="h-[2px] w-[20px] bg-[#999]" />
        <div className="h-[19px] w-[19px] border-2 border-[#999]" />
        <svg viewBox="0 0 20 20" width="20" height="20"><path d="M1 0l18 20M19 0L1 20" stroke="#999" strokeWidth="1.500" /></svg>
      </div>
    </div>
  );
}

function MenuBar() {
  const items = ["文件(F)", "编辑(E)", "视图(V)", "格式(O)", "工具(B)", "下载(D)", "帮助(H)"];
  return (
    <div className={`flex h-[52px] shrink-0 items-center gap-[35px] bg-gradient-to-b from-[#c8d2e2] to-[#aebbd0] pb-[3px] pl-[21px] pr-[20px] ${cjk} text-[24px] leading-none text-[#1d2a44]`}>
      {items.map((m) => <span key={m}>{m}</span>)}
      <span className="ml-auto font-['Noto_Sans',sans-serif] text-[25px]">Style</span>
    </div>
  );
}

export default function App() {
  return (
    <div className="relative flex h-[1055px] w-[1684px] flex-col overflow-hidden bg-white">
      <Defs />
      <TitleBar />
      <MenuBar />
      <Toolbar />
      <div className="flex h-[855px] shrink-0 gap-[6px] bg-[#9aa8c0] pl-[2px] pr-[2px] pt-[1px]">
        <div className="flex w-[443px] shrink-0 flex-col gap-[6px]">
          <ToolBox />
          <ImagePanel />
        </div>
        <Center />
        <div className="flex w-[472px] shrink-0 flex-col gap-[6px]">
          <ProjectPanel />
          <PropPanel />
        </div>
      </div>
      <div className={`flex h-[39px] shrink-0 items-center justify-between border-b border-[#9aa8c0] bg-[#bcc8da] pl-[10px] pr-[40px] ${cjk} text-[24px] leading-none text-[#333]`}>
        <span>设备:未连接</span>
        <span className="tracking-[0.4px]">当前时间:2021/1/5 15:58:04</span>
      </div>
      <Dialog />
      <div className="pointer-events-none absolute left-[610px] top-[100px] h-[74px] w-[88px] border-[4px] border-[#ee1c25]" />
      <div className="pointer-events-none absolute left-[574px] top-[504px] h-[412px] w-[1003px] border-[4px] border-[#ee1c25]" />
      <div className="pointer-events-none absolute left-[706px] top-[677px] h-[82px] w-[804px] border-[4px] border-[#ee1c25]" />
    </div>
  );
}
